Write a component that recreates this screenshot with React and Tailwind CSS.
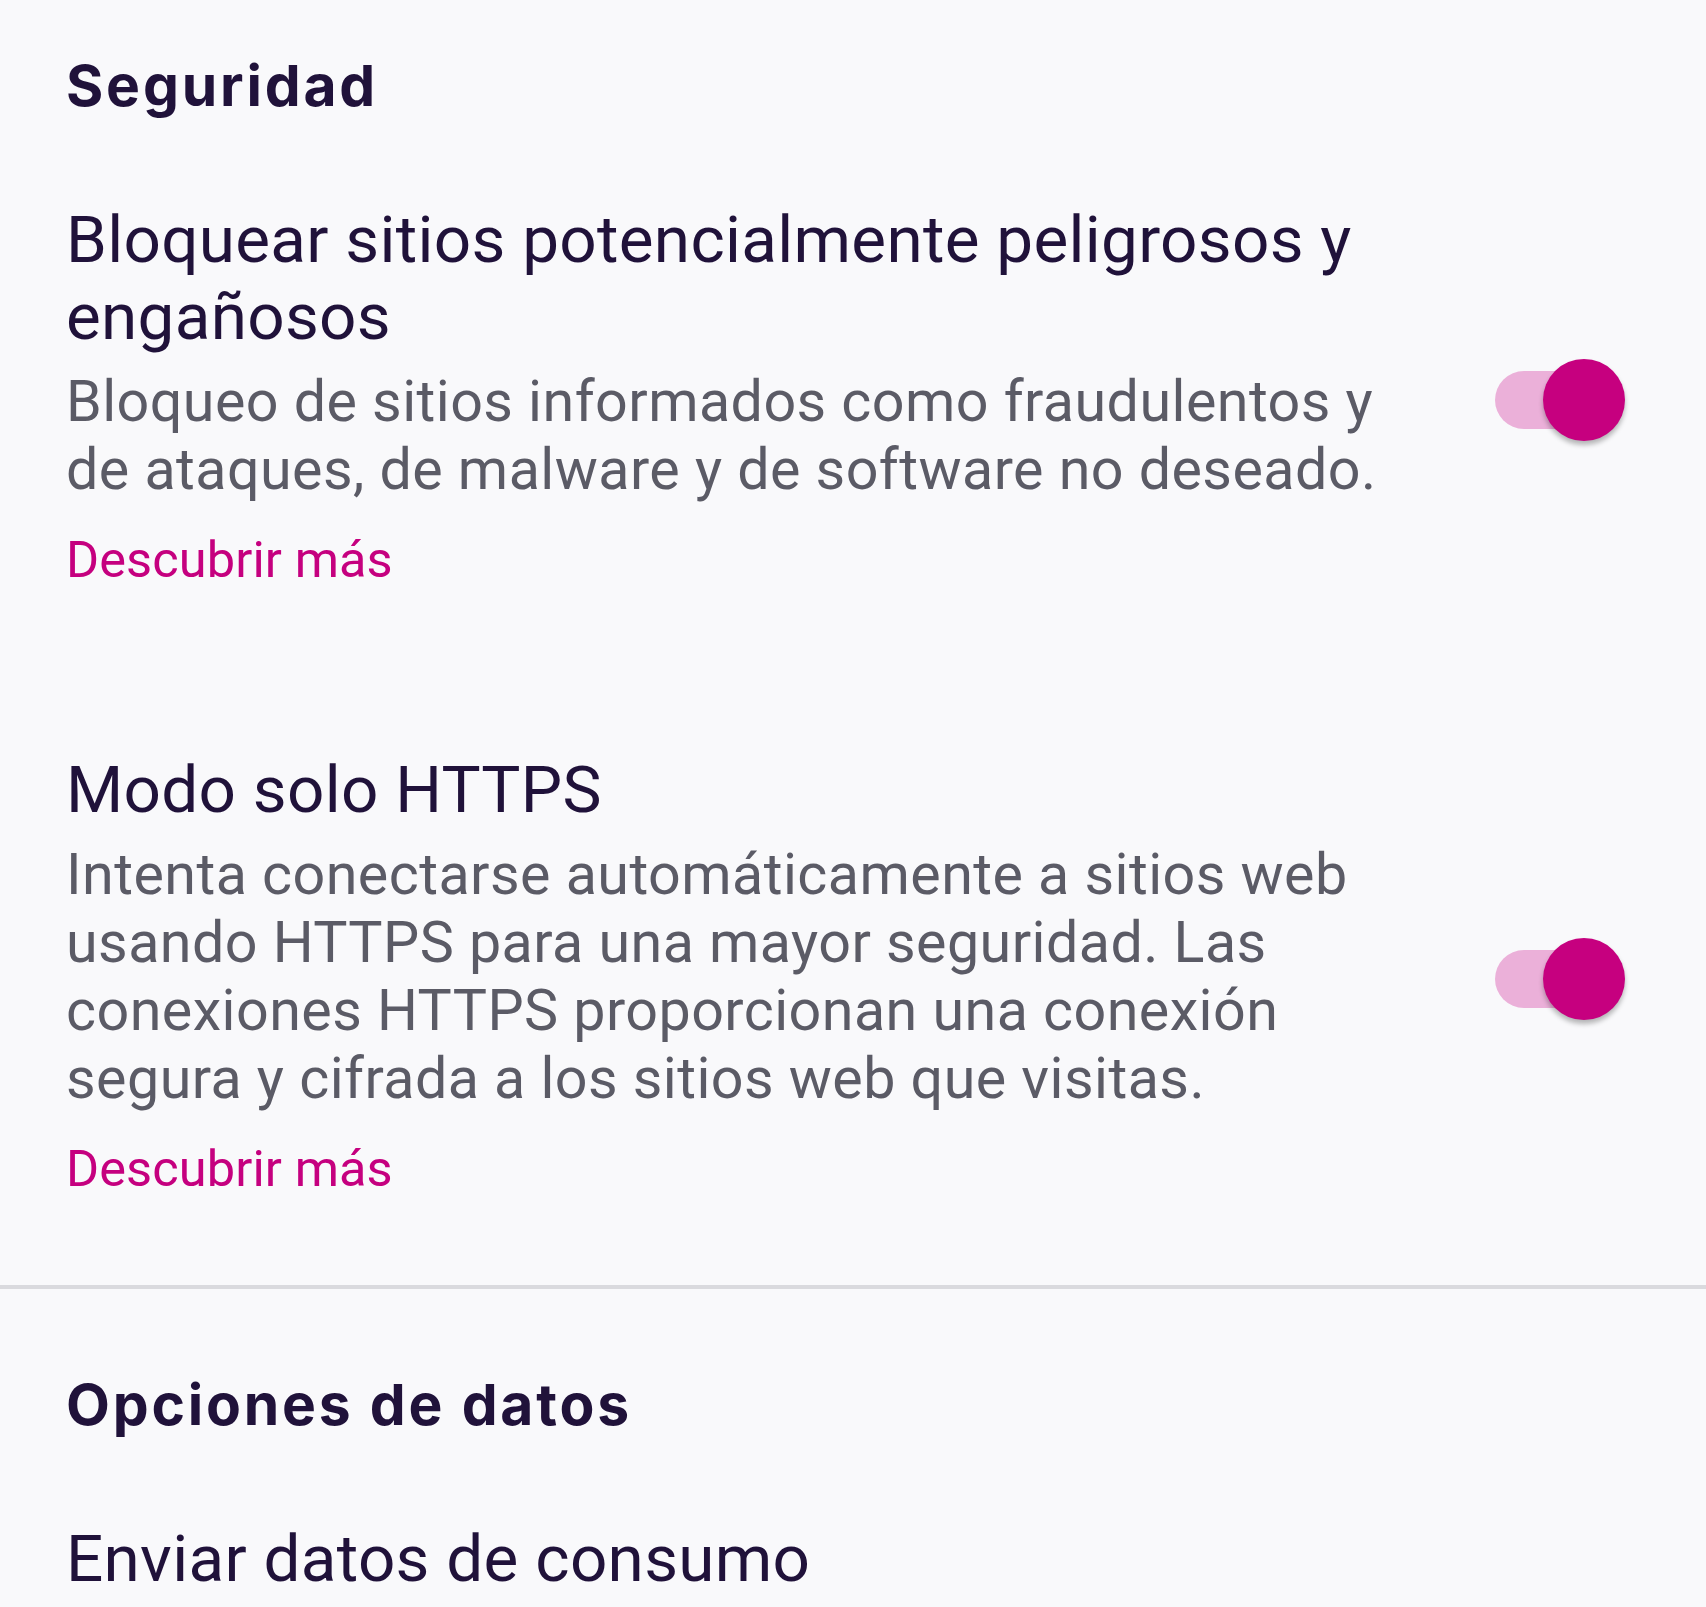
import React from 'react'

const roboto = { fontFamily: 'Roboto, "Noto Sans", sans-serif' }

function Toggle() {
  return (
    <div className="relative w-[130px] h-[82px] flex items-center shrink-0 mt-[8px]">
      <div className="w-[118px] h-[58px] rounded-full bg-[#ebb0d9]" />
      <div className="absolute right-0 top-0 w-[82px] h-[82px] rounded-full bg-[#c6007f] shadow-[0_4px_5px_rgba(0,0,0,0.28)]" />
    </div>
  )
}

function Heading({ children }) {
  return (
    <h2
      className="pl-[66px] text-[57px] leading-[68px] font-bold text-[#20123a] tracking-[2.8px]"
      style={{ fontFamily: 'Inter, Lato, sans-serif' }}
    >
      {children}
    </h2>
  )
}

function SwitchPref({ title, summary, className }) {
  return (
    <div className={`flex items-center pl-[66px] pr-[81px] ${className}`}>
      <div className="w-[1354px] mr-[75px]" style={roboto}>
        <p className="text-[65.6px] leading-[77px] text-[#20123a] tracking-[0.3px]">{title}</p>
        <p className="mt-[13px] text-[57.4px] leading-[68px] text-[#5b5b66] tracking-[0.45px]">{summary}</p>
        <p className="mt-[26px] text-[50.5px] leading-[60px] text-[#c5007f] tracking-[0.1px]">Descubrir más</p>
      </div>
      <Toggle />
    </div>
  )
}

export default function App() {
  return (
    <div className="w-[1706px] h-[1607px] overflow-hidden bg-[#f9f9fb]">
      <div className="pt-[52px]">
        <Heading>Seguridad</Heading>
      </div>

      <SwitchPref
        className="pt-[81px] pb-[80px]"
        title="Bloquear sitios potencialmente peligrosos y engañosos"
        summary="Bloqueo de sitios informados como fraudulentos y de ataques, de malware y de software no deseado."
      />
      <SwitchPref
        className="pt-[81px] pb-[86px]"
        title="Modo solo HTTPS"
        summary="Intenta conectarse automáticamente a sitios web usando HTTPS para una mayor seguridad. Las conexiones HTTPS proporcionan una conexión segura y cifrada a los sitios web que visitas."
      />

      <div className="h-[4px] bg-[#dadade]" />

      <div className="pt-[82px]">
        <Heading>Opciones de datos</Heading>
      </div>

      <div className="pl-[66px] pt-[81px]" style={roboto}>
        <p className="text-[65.6px] leading-[77px] text-[#20123a] tracking-[0.3px]">Enviar datos de consumo</p>
      </div>
    </div>
  )
}
